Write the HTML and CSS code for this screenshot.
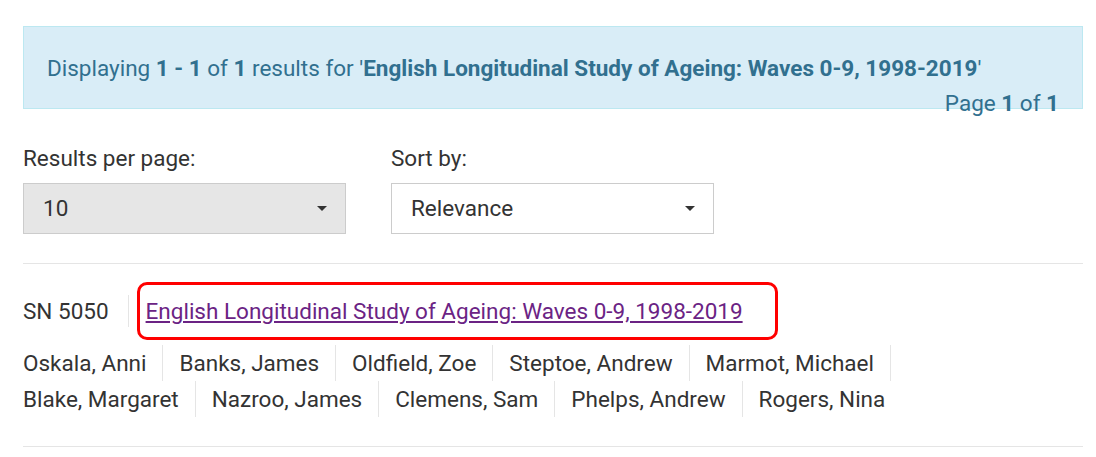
FILE: index.html
```html
<!DOCTYPE html>
<html lang="en">
<head>
    <meta charset="UTF-8">
    <title>Search results</title>
    <link rel="stylesheet" href="styles.css">
</head>
<body>
    <div class="page">
        <div class="results-alert">
            <p class="results-count">Displaying <b>1 - 1</b> of <b>1</b> results for '<b>English Longitudinal Study of Ageing: Waves 0-9, 1998-2019</b>'</p>
            <p class="page-count">Page <b>1</b> of <b>1</b></p>
        </div>

        <div class="controls">
            <div class="control">
                <label>Results per page:</label>
                <div class="select select-grey">10<span class="caret"></span></div>
            </div>
            <div class="control">
                <label>Sort by:</label>
                <div class="select">Relevance<span class="caret"></span></div>
            </div>
        </div>

        <div class="result">
            <div class="result-title">
                <span class="sn">SN 5050</span>
                <span class="highlight"><a href="#">English Longitudinal Study of Ageing: Waves 0-9, 1998-2019</a></span>
            </div>
            <ul class="authors">
                <li>Oskala, Anni</li>
                <li>Banks, James</li>
                <li>Oldfield, Zoe</li>
                <li>Steptoe, Andrew</li>
                <li>Marmot, Michael</li>
                <li>Blake, Margaret</li>
                <li>Nazroo, James</li>
                <li>Clemens, Sam</li>
                <li>Phelps, Andrew</li>
                <li>Rogers, Nina</li>
            </ul>
        </div>
    </div>
</body>
</html>
```

FILE: styles.css
```css
body {
    margin: 0;
    font-family: Roboto, "Liberation Sans", sans-serif;
    font-size: 22.5px;
    color: #333;
    background: #fff;
}
.page {
    width: 1060px;
    margin-left: 23px;
    padding-top: 26px;
}
.results-alert {
    box-sizing: border-box;
    background: #d9edf7;
    border: 1px solid #bce8f1;
    color: #31708f;
    height: 83px;
    padding: 0 23px;
}
.results-alert p {
    margin: 0;
    line-height: 26px;
}
.results-count {
    padding-top: 28px;
}
.results-alert .page-count {
    text-align: right;
    margin-top: 9px;
}
.controls {
    display: flex;
    gap: 45px;
    margin-top: 36px;
}
.control label {
    display: block;
    line-height: 26px;
    margin-bottom: 12px;
}
.select {
    position: relative;
    box-sizing: border-box;
    width: 323px;
    height: 51px;
    line-height: 49px;
    border: 1px solid #ccc;
    padding-left: 19px;
}
.select-grey {
    background: #e6e6e6;
}
.caret {
    position: absolute;
    right: 18px;
    top: 22px;
    border-left: 5px solid transparent;
    border-right: 5px solid transparent;
    border-top: 5px solid #333;
}
.result {
    margin-top: 29px;
    border-top: 1px solid #e5e5e5;
    border-bottom: 1px solid #e5e5e5;
    padding: 18px 0 29px;
}
.result-title {
    display: flex;
    align-items: center;
}
.sn {
    padding-right: 19px;
    border-right: 1px solid #e5e5e5;
    line-height: 32px;
}
.highlight {
    margin-left: 8px;
    border: 3px solid #f00;
    border-radius: 10px;
    padding: 13px 32px 13px 6px;
    line-height: 26px;
}
.highlight a {
    color: #6b2384;
}
.authors {
    list-style: none;
    margin: 5px 0 0;
    padding: 0;
    display: flex;
    flex-wrap: wrap;
    max-width: 1000px;
}
.authors li {
    padding: 4px 16px;
    border-right: 1px solid #e5e5e5;
    line-height: 28px;
}
.authors li:nth-child(1),
.authors li:nth-child(6) {
    padding-left: 0;
}
.authors li:nth-child(5) {
    margin-right: 120px;
}
.authors li:last-child {
    border-right: none;
}
```
